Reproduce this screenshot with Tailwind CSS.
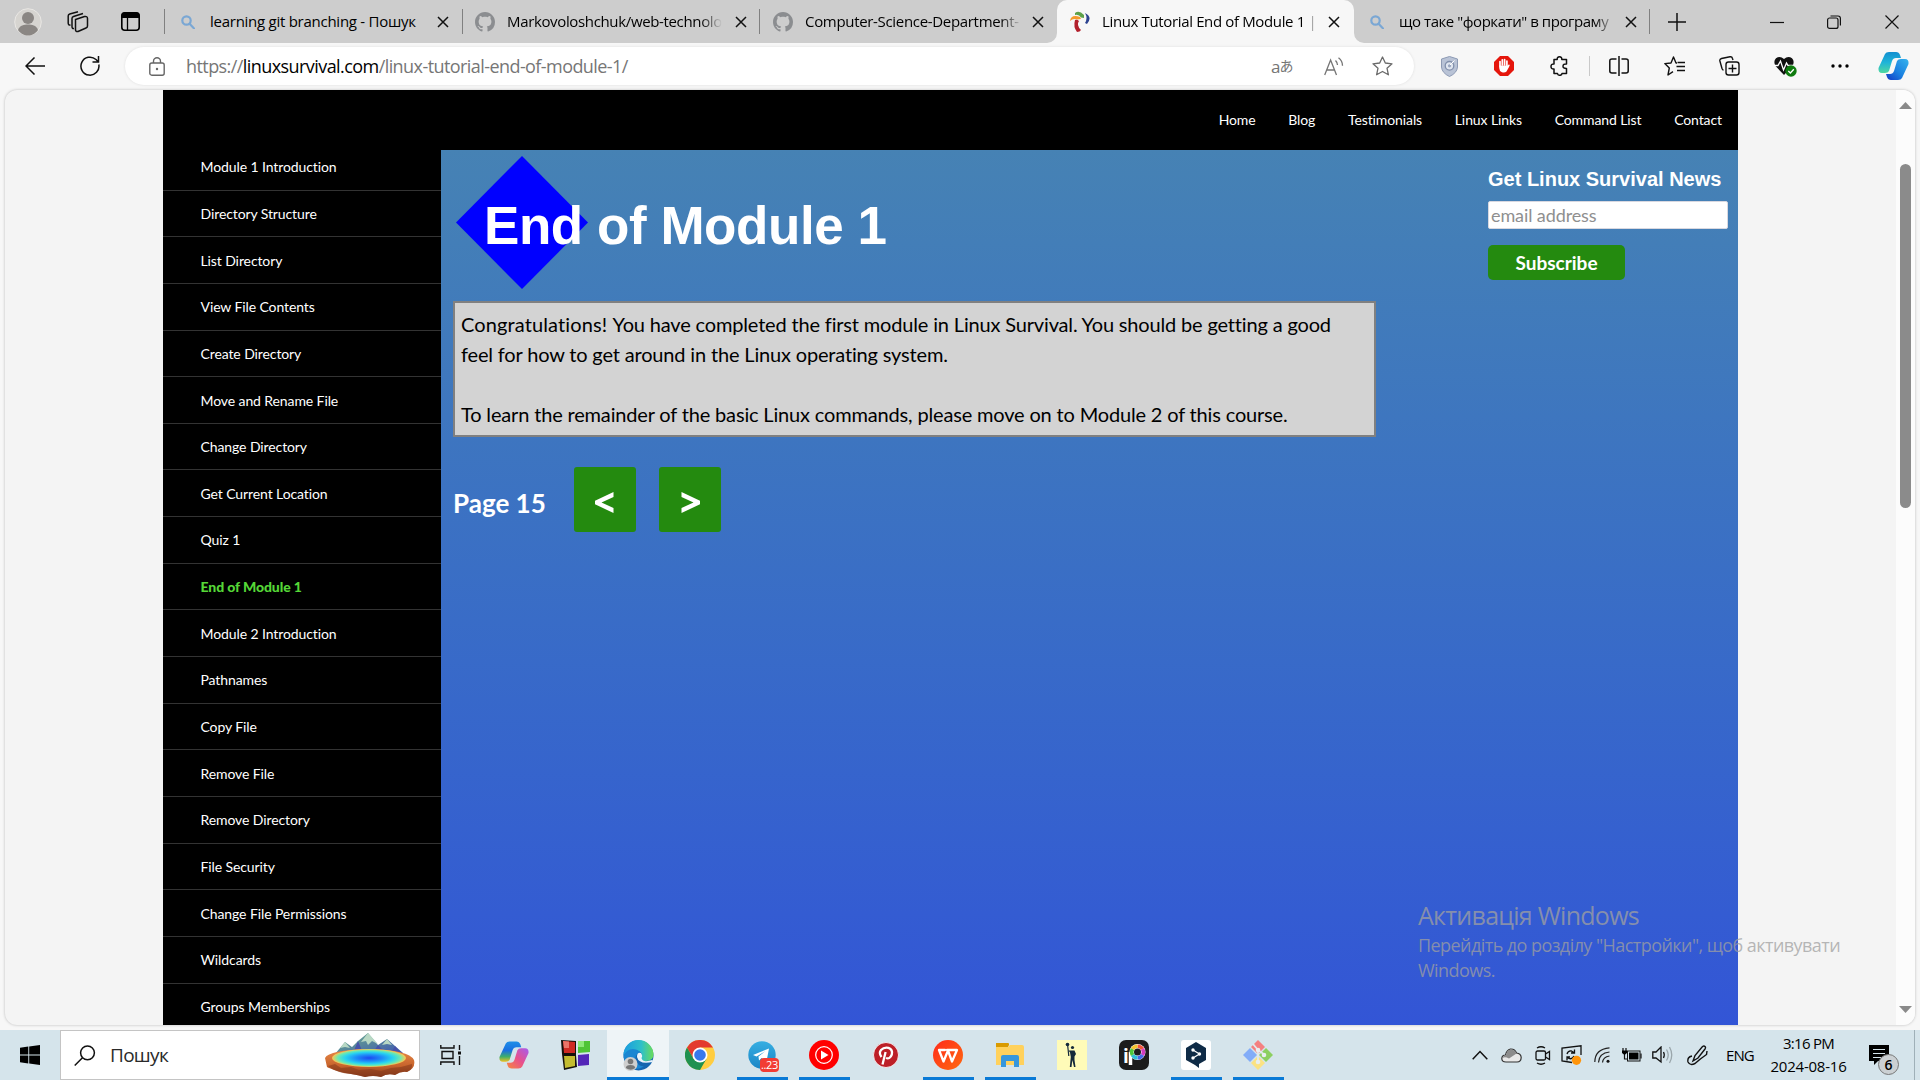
<!DOCTYPE html>
<html lang="uk">
<head>
<meta charset="utf-8">
<title>Linux Tutorial End of Module 1</title>
<script src="https://cdn.jsdelivr.net/npm/@tailwindcss/browser@4"></script>
</head>
<body class="w-[1920px] h-[1080px] overflow-hidden flex flex-col bg-[#f7f7f7] text-black font-['Open_Sans',sans-serif] relative">
<svg class="absolute w-0 h-0">
  <defs>
    <linearGradient id="cpA" x1="0" y1="0" x2="0" y2="1"><stop offset="0" stop-color="#1f8fe8"/><stop offset=".45" stop-color="#1a6fe0"/><stop offset=".75" stop-color="#3fae6a"/><stop offset="1" stop-color="#f0c020"/></linearGradient>
    <linearGradient id="cpB" x1="1" y1="0" x2="0" y2="1"><stop offset="0" stop-color="#a55cf0"/><stop offset=".5" stop-color="#e8508c"/><stop offset="1" stop-color="#f7883c"/></linearGradient>
    <linearGradient id="cpC" x1="0" y1="0" x2="0" y2="1"><stop offset="0" stop-color="#128fd0"/><stop offset=".5" stop-color="#1fb4d8"/><stop offset="1" stop-color="#50d8a0"/></linearGradient>
    <linearGradient id="cpD" x1="1" y1="0" x2="0" y2="1"><stop offset="0" stop-color="#35b4ee"/><stop offset=".55" stop-color="#1a80e0"/><stop offset="1" stop-color="#1238c4"/></linearGradient>
    <linearGradient id="edA" x1="0" y1="0" x2="1" y2="0"><stop offset="0" stop-color="#1a9be0"/><stop offset=".6" stop-color="#2ec0c8"/><stop offset="1" stop-color="#6bdc58"/></linearGradient>
    <linearGradient id="tg" x1="0" y1="0" x2="0" y2="1"><stop offset="0" stop-color="#36aee2"/><stop offset="1" stop-color="#1b86c6"/></linearGradient>
    <linearGradient id="wp" x1="0" y1="0" x2="1" y2="1"><stop offset="0" stop-color="#ff2a1a"/><stop offset="1" stop-color="#ff6a10"/></linearGradient>
    <linearGradient id="mt" x1="0" y1="0" x2="1" y2="1"><stop offset="0" stop-color="#6fb58a"/><stop offset=".5" stop-color="#54809e"/><stop offset="1" stop-color="#3c50b8"/></linearGradient>
    <radialGradient id="lake"><stop offset="0" stop-color="#1c48f0"/><stop offset=".35" stop-color="#1e8cf8"/><stop offset=".65" stop-color="#28d4f0"/><stop offset=".85" stop-color="#6ee8b0"/><stop offset="1" stop-color="#ffc850"/></radialGradient>
    <linearGradient id="rock" x1="0" y1="0" x2="0" y2="1"><stop offset="0" stop-color="#e88a48"/><stop offset=".6" stop-color="#c8642c"/><stop offset="1" stop-color="#7c3418"/></linearGradient>
    <path id="gh" fill="#8b8d90" d="M8 0C3.58 0 0 3.58 0 8c0 3.54 2.29 6.53 5.47 7.59.4.07.55-.17.55-.38 0-.19-.01-.82-.01-1.49-2.01.37-2.53-.49-2.69-.94-.09-.23-.48-.94-.82-1.13-.28-.15-.68-.52-.01-.53.63-.01 1.08.58 1.23.82.72 1.21 1.87.87 2.33.66.07-.52.28-.87.51-1.07-1.78-.2-3.64-.89-3.64-3.95 0-.87.31-1.59.82-2.15-.08-.2-.36-1.02.08-2.12 0 0 .67-.21 2.2.82.64-.18 1.32-.27 2-.27s1.36.09 2 .27c1.53-1.04 2.2-.82 2.2-.82.44 1.1.16 1.92.08 2.12.51.56.82 1.27.82 2.15 0 3.07-1.87 3.75-3.65 3.95.29.25.54.73.54 1.48 0 1.07-.01 1.93-.01 2.2 0 .21.15.46.55.38A8.01 8.01 0 0 0 16 8c0-4.42-3.58-8-8-8z"/>
    <g id="mag" fill="none" stroke="#7aa7d4" stroke-width="2.2"><circle cx="5.5" cy="5.5" r="4.2"/><path d="M8.6 8.8 13 13.4" stroke-linecap="round"/></g>
    <path id="x" d="M1 1 11 11M11 1 1 11" fill="none" stroke="#111" stroke-width="1.5"/>
  </defs>
</svg>

<!-- tab strip -->
<header class="h-[43px] shrink-0 flex items-center bg-[#cdcdcd] text-[15px]">
  <div class="w-[164px] flex items-center pl-[14px]">
    <svg class="size-7 shrink-0" viewBox="0 0 28 28"><circle cx="14" cy="14" r="13.3" fill="#d6d4d0" stroke="#e9e7e4"/><circle cx="14" cy="10" r="6" fill="#8a8683"/><path d="M4 22c2-5 6-5.500 10-5.500s8 .5 10 5.500c-3 4-6 5.500-10 5.500S7 26 4 22z" fill="#8a8683"/></svg>
    <svg class="w-[22px] h-[22px] ml-[25px] shrink-0" viewBox="0 0 22 22" fill="none" stroke="#111" stroke-width="1.5" stroke-linejoin="round"><path d="M8.500 8.500 17.500 5.500Q20.500 5 20.500 7.500V15q0 1.500-1.500 2L11 20.500Q8.500 21 8.500 18.500z"/><path d="M7 17.500Q5 18 5 15.500V7.500Q5 6 6.500 5.500L16 2.500M3.500 14Q1.200 14.500 1.200 12V5Q1.200 3.500 2.700 3L11 .8"/></svg>
    <svg class="w-[19px] h-[19px] ml-[32px] shrink-0" viewBox="0 0 19 19"><rect x=".8" y=".8" width="17.400" height="17.400" rx="3" fill="none" stroke="#000" stroke-width="1.600"/><path d="M.5 6V3Q.5.500 3 .5H16Q18.500.5 18.500 3V6z"/><path d="M6.500 5V18" stroke="#000" stroke-width="1.300"/></svg>
  </div>
  <div class="w-px h-[25px] bg-[#808080]"></div>
  <div class="w-[297px] flex items-center">
    <svg class="w-[14px] h-[14px] ml-[16px] shrink-0" viewBox="0 0 14 14"><use href="#mag"/></svg>
    <span class="ml-[15px] w-[212px] whitespace-nowrap tracking-[-0.26px]">learning git branching - Пошук</span>
    <svg class="size-3 ml-[15px] shrink-0" viewBox="0 0 12 12"><use href="#x"/></svg>
  </div>
  <div class="w-px h-[25px] bg-[#808080]"></div>
  <div class="w-[296px] flex items-center">
    <svg class="size-5 ml-[12px] shrink-0" viewBox="0 0 16 16"><use href="#gh"/></svg>
    <span class="ml-[12px] w-[215px] whitespace-nowrap tracking-[-0.35px] mask-r-from-90%">Markovoloshchuk/web-technolo</span>
    <svg class="size-3 ml-[13px] shrink-0" viewBox="0 0 12 12"><use href="#x"/></svg>
  </div>
  <div class="w-px h-[25px] bg-[#808080]"></div>
  <div class="w-[297px] flex items-center">
    <svg class="size-5 ml-[13px] shrink-0" viewBox="0 0 16 16"><use href="#gh"/></svg>
    <span class="ml-[12px] w-[217px] whitespace-nowrap tracking-[-0.32px] mask-r-from-90%">Computer-Science-Department-</span>
    <svg class="size-3 ml-[10px] shrink-0" viewBox="0 0 12 12"><use href="#x"/></svg>
  </div>
  <div class="w-[297px] h-full relative bg-[#f7f7f7] rounded-t-[10px] flex items-center">
    <svg class="absolute left-[-10px] bottom-0 size-2.5" viewBox="0 0 10 10"><path d="M10 0V10H0A10 10 0 0 0 10 0z" fill="#f7f7f7"/></svg>
    <svg class="absolute right-[-10px] bottom-0 size-2.5" viewBox="0 0 10 10"><path d="M0 0V10H10A10 10 0 0 1 0 0z" fill="#f7f7f7"/></svg>
    <svg class="w-5 h-[21px] ml-[13px] shrink-0" viewBox="0 0 20 21"><path d="M5 2Q9-1.500 14 4L14 7L11 6.500Q9 3 5 4z" fill="#5ea14a"/><path d="M0 10Q1 3 10 6L11 8L7 8.500Q3 7 0 10z" fill="#f59a2c"/><path d="M5 9Q7 8 9 10Q6 14 11 19Q10 21 7 21Q3 16 5 9z" fill="#b3202c"/><path d="M15 2Q23 6 17 13L15 12Q18 7 15 2z" fill="#2c4390"/></svg>
    <span class="ml-[12px] w-[217px] whitespace-nowrap tracking-[-0.36px] mask-r-from-92%">Linux Tutorial End of Module 1 |</span>
    <svg class="size-3 ml-[9px] shrink-0" viewBox="0 0 12 12"><use href="#x"/></svg>
  </div>
  <div class="w-[295px] flex items-center">
    <svg class="w-[14px] h-[14px] ml-[16px] shrink-0" viewBox="0 0 14 14"><use href="#mag"/></svg>
    <span class="ml-[15px] w-[217px] whitespace-nowrap tracking-[-0.45px] mask-r-from-90%">що таке "форкати" в програму</span>
    <svg class="size-3 ml-[9px] shrink-0" viewBox="0 0 12 12"><use href="#x"/></svg>
  </div>
  <div class="w-px h-[25px] bg-[#808080]"></div>
  <svg class="w-[18px] h-[18px] ml-[18px]" viewBox="0 0 18 18"><path d="M9 0V18M0 9H18" stroke="#111" stroke-width="1.500"/></svg>
  <svg class="w-[14px] h-[14px] ml-[84px]" viewBox="0 0 14 14"><path d="M0 7.500H14" stroke="#111" stroke-width="1.200"/></svg>
  <svg class="w-[14px] h-[14px] ml-[43px]" viewBox="0 0 14 14" fill="none" stroke="#111" stroke-width="1.200"><rect x=".6" y="3" width="10.400" height="10.400" rx="2"/><path d="M3.500 1H11q2.400 0 2.400 2.400V10.500"/></svg>
  <svg class="w-[14px] h-[14px] ml-[44px]" viewBox="0 0 14 14"><path d="M.5.500 13.500 13.500M13.500.500.500 13.500" stroke="#111" stroke-width="1.200"/></svg>
</header>

<!-- address bar -->
<div class="h-[47px] shrink-0 flex items-center pl-[25px] pb-[1px] text-[#1a1a1a]">
  <svg class="w-[20px] h-[18px]" viewBox="0 0 20 18"><path d="M20 9H1M9.500.500 1 9 9.500 17.500" fill="none" stroke="#111" stroke-width="1.500"/></svg>
  <svg class="w-[20px] h-[20px] ml-[35px]" viewBox="0 0 20 20"><path d="M18.800 8.500A9 9 0 1 1 16 3.500L18.500 6M18.500 0V6H12.500" fill="none" stroke="#111" stroke-width="1.500"/></svg>
  <div class="ml-[25px] w-[1289px] h-[38px] rounded-full bg-white shadow-[0_0_3px_rgba(0,0,0,0.1)] flex items-center pl-[24px]">
    <svg class="w-[16px] h-[19px] shrink-0" viewBox="0 0 16 19" fill="none" stroke="#666" stroke-width="1.400"><rect x=".8" y="6" width="14.400" height="12.200" rx="2"/><path d="M4.500 6V4.200a3.500 3.500 0 0 1 7 0V6"/><circle cx="8" cy="12" r="1.200" fill="#666" stroke="none"/></svg>
    <span class="ml-[21px] w-[1085px] whitespace-nowrap text-[18px] tracking-[-0.57px] text-[#767676]">https://<span class="text-black">linuxsurvival.com</span>/linux-tutorial-end-of-module-1/</span>
    <span class="w-[24px] flex items-center text-[17px] leading-none tracking-[-1px] text-[#757575] whitespace-nowrap font-['Open_Sans','Noto_Sans_CJK_JP',sans-serif]">a<span class="text-[14px]">あ</span></span>
    <svg class="w-[20px] h-[19px] ml-[29px] shrink-0" viewBox="0 0 20 19" fill="none" stroke="#757575" stroke-width="1.300"><path d="M.7 18 6.600 3 12.500 18M2.500 13H10.700M11.500 3.500q2 2 2 4.500M14.500 .8q4 3 4 8"/></svg>
    <svg class="w-[21px] h-[20px] ml-[28px] shrink-0" viewBox="0 0 21 20"><path d="M10.500 1 13.300 7 20 7.800 15 12.200 16.400 18.800 10.500 15.500 4.600 18.800 6 12.200 1 7.800 7.700 7z" fill="none" stroke="#6a6a6a" stroke-width="1.300" stroke-linejoin="round"/></svg>
  </div>
  <svg class="w-[17px] h-[21px] ml-[27px]" viewBox="0 0 17 21"><path d="M8.500.500 16.500 3V11Q16 17 8.500 20.500 1 17 .5 11V3z" fill="#b9c3d6" stroke="#8d9ab4"/><circle cx="8.500" cy="9.800" r="4.300" fill="#dfe5ef" stroke="#8290ac" stroke-width="1.300"/><circle cx="8.500" cy="9.800" r="1.600" fill="#98a5be"/><path d="M9 9 13.500 4.500" stroke="#fff"/></svg>
  <svg class="w-[20px] h-[20px] ml-[36px]" viewBox="0 0 20 20"><path d="M6 0H14L20 6V14L14 20H6L0 14V6z" fill="#e5160c"/><path d="M6 10V5.500M8.300 9V3.800M10.600 9V3.500M12.900 9.500V5" stroke="#fff" stroke-width="1.700" stroke-linecap="round"/><path d="M5.200 9.500H13.800L15 8.300Q16.500 9 15 11L12.500 15.500Q11 17 8 16.300 5.200 15 5.200 12z" fill="#fff"/></svg>
  <svg class="w-[20px] h-[20px] ml-[36px]" viewBox="0 0 20 20"><path d="M4 3.500H7.200Q7 .8 9.500 .8T11.800 3.500H16.500V8Q13 7.800 13 10.200T16.500 12.500V17.500H12Q11.800 19.300 9.800 19.300T7.500 17.500H4V13Q1 13.200 1 10.500T4 8z" fill="none" stroke="#111" stroke-width="1.500" stroke-linejoin="round"/></svg>
  <div class="w-px h-[20px] bg-[#c9c9c9] ml-[19px]"></div>
  <svg class="w-[20px] h-[20px] ml-[19px]" viewBox="0 0 20 20" fill="none" stroke="#111" stroke-width="1.500"><path d="M10 0V20M7.500 3H3Q.8 3 .8 5V15Q.8 17 3 17H7.500M12.500 3H17Q19.200 3 19.200 5V15Q19.200 17 17 17H12.500"/></svg>
  <svg class="w-[21px] h-[20px] ml-[35px]" viewBox="0 0 21 20" fill="none" stroke="#111" stroke-width="1.400" stroke-linejoin="round"><path d="M13 7H12L9.500 1 7 7 .8 7.600 5.300 12 4 19 9 15.700M12.500 10.500H21M13.500 6.500H21M13 14.500H21"/></svg>
  <svg class="w-[21px] h-[20px] ml-[34px]" viewBox="0 0 21 20" fill="none" stroke="#111" stroke-width="1.400"><rect x="7" y="6" width="13" height="13" rx="2.500"/><path d="M13.500 8.500V16.500M9.500 12.500H17.500M4.500 14Q3.500 14 3 12.500L.9 5Q.5 3 2.500 2.500L11 .8Q13 .5 13.500 2.500L14 4"/></svg>
  <svg class="w-[23px] h-[21px] ml-[34px]" viewBox="0 0 23 21"><path d="M10 19 1.500 10Q-1 5 2 2.200 6-.5 10 3 14-.5 18 2.200 21 5 18.500 10z" fill="#111"/><path d="M0 9.500H4L6.500 5 9.500 14 12.500 7 14 9.500H19" fill="none" stroke="#fff" stroke-width="1.300"/><circle cx="17" cy="15" r="5.700" fill="#0f7b0f"/><path d="M14.300 15 16.400 17 19.800 13.300" fill="none" stroke="#fff" stroke-width="1.300"/></svg>
  <svg class="w-[18px] h-[4px] ml-[34px]" viewBox="0 0 18 4"><circle cx="2" cy="2" r="1.700"/><circle cx="9" cy="2" r="1.700"/><circle cx="16" cy="2" r="1.700"/></svg>
  <svg class="w-[31px] h-[28px] ml-[29px]" viewBox="0 0 31 28"><path d="M7 2Q8 0 11 0H18Q21 0 22 3L23 6H18Q15 6 14 9L11 19Q10 21 7 21H4Q0 21 .5 16z" fill="url(#cpC)"/><path d="M24 26Q23 28 20 28H13Q10 28 9 25L8 22H12Q15 22 16 19L19 9Q20 7 23 7H27Q31 7 30.500 12z" fill="url(#cpD)"/></svg>
</div>

<!-- page viewport -->
<main class="mx-[5px] h-[935px] shrink-0 w-[1910px] rounded-[12px] overflow-hidden bg-[#f4f4f4] shadow-[0_0_3px_rgba(0,0,0,0.25)] flex font-['Lato',sans-serif]">
  <div class="ml-[158px] w-[1575px] flex flex-col bg-black">
    <nav class="h-[60px] shrink-0 flex items-center justify-end gap-[32.7px] pr-[16px] pb-[2px] text-[14px] tracking-[-0.1px] text-white">
      <a>Home</a><a>Blog</a><a>Testimonials</a><a>Linux Links</a><a>Command List</a><a>Contact</a>
    </nav>
    <div class="flex-1 min-h-0 flex">
      <ul id="menu" class="w-[278px] h-[875px] overflow-hidden -mt-[6px] shrink-0 text-[14px] tracking-[-0.1px] text-white"></ul>
      <div class="flex-1 flex justify-between bg-linear-to-b from-[#4682b4] to-[#3355d6]">
        <section class="ml-[12px] w-[923px] flex flex-col text-white">
          <div class="relative h-[151px] shrink-0">
            <svg class="absolute left-[3px] top-[6px] w-[132px] h-[133px]" viewBox="0 0 133 133" preserveAspectRatio="none"><path d="M66.500 0 133 66.500 66.500 133 0 66.500z" fill="#00f"/></svg>
            <h1 class="absolute left-[31px] top-[46px] whitespace-nowrap leading-[60px] font-bold text-[53px] tracking-[-0.45px] font-['Liberation_Sans',sans-serif]">End of Module 1</h1>
          </div>
          <div class="h-[136px] shrink-0 border-2 border-[#808080] bg-[#d3d3d3] text-black text-[20px] leading-[30px] tracking-[-0.165px] px-[6px] pt-[6px]">
            <p class="whitespace-nowrap"><span class="tracking-[0.12px]">Congratulations! </span>You have completed the first module in Linux Survival. You should be getting a good<br>feel for how to get around in the Linux operating system.</p>
            <p class="mt-[30px] whitespace-nowrap">To learn the remainder of the basic Linux commands, please move on to Module 2 of this course.</p>
          </div>
          <div class="mt-[30px] flex items-center font-bold">
            <span class="w-[121px] pt-[7px] text-[26px] leading-8">Page 15</span>
            <button class="w-[62px] h-[65px] rounded-[3px] bg-[#248a0f] flex items-center justify-center"><svg class="w-[19px] h-[21px] mt-[5px] mr-[2px]" viewBox="0 0 19 21"><path d="M18.500 0V5L6.500 10.500 18.500 16V21L0 12.300V8.700z" fill="#fff"/></svg></button>
            <button class="ml-[23px] w-[62px] h-[65px] rounded-[3px] bg-[#248a0f] flex items-center justify-center"><svg class="w-[19px] h-[21px] mt-[5px]" viewBox="0 0 19 21"><path d="M.5 0V5L12.500 10.500.5 16V21L19 12.300V8.700z" fill="#fff"/></svg></button>
          </div>
        </section>
        <aside class="w-[250px] pt-[17px] flex flex-col items-start text-white">
          <h2 class="font-bold text-[20px] leading-6 whitespace-nowrap font-['Liberation_Sans',sans-serif]">Get Linux Survival News</h2>
          <div class="mt-[10px] w-[240px] h-[28px] rounded-[2px] border border-[#d8d8e0] bg-white pl-[2px] text-[18px] leading-[26px] tracking-[-0.1px] text-[#8f8f8f]">email address</div>
          <button class="mt-[16px] w-[137px] h-[35px] rounded-[5px] bg-[#248a0f] text-[19px] leading-[35px] font-bold">Subscribe</button>
        </aside>
      </div>
    </div>
  </div>
  <div class="ml-auto w-[19px] bg-[#fcfcfc] flex flex-col items-center pt-[12px] pb-[12px]">
    <svg class="w-[13px] h-[7px]" viewBox="0 0 13 7"><path d="M6.500 0 13 7H0z" fill="#8a8a8a"/></svg>
    <div class="mt-[55px] w-[11px] h-[344px] rounded-full bg-[#8b8b8b]"></div>
    <svg class="mt-auto w-[13px] h-[7px]" viewBox="0 0 13 7"><path d="M6.500 7 13 0H0z" fill="#8a8a8a"/></svg>
  </div>
</main>
<div class="h-[5px] shrink-0"></div>

<!-- activation notice -->
<div class="absolute left-[1418px] top-[898px] text-[#a0a0a0]/75 whitespace-nowrap">
  <p class="text-[25px] leading-[34px] tracking-[-0.72px]">Активація Windows</p>
  <p class="text-[18px] leading-[25px] pt-px tracking-[-0.56px]">Перейдіть до розділу "Настройки", щоб активувати<br>Windows.</p>
</div>

<!-- taskbar -->
<footer class="h-[50px] shrink-0 flex items-center bg-[#d5e4eb]">
  <svg class="w-[20px] h-[20px] ml-[20px]" viewBox="0 0 20 20"><path d="M0 2.800 8.300 1.600V9.500H0zM9.200 1.500 20 0V9.500H9.200zM0 10.400H8.300V18.400L0 17.200zM9.200 10.400H20V20L9.200 18.500z"/></svg>
  <div class="ml-[20px] w-[360px] h-[50px] bg-white border border-[#c4c4c4] flex items-center">
    <svg class="w-[22px] h-[21px] ml-[13px]" viewBox="0 0 22 21"><circle cx="13.500" cy="7.800" r="6.900" fill="none" stroke="#111" stroke-width="1.500"/><path d="M8.500 12.800.7 20.500" stroke="#111" stroke-width="1.500"/></svg>
    <span class="ml-[14px] text-[19px] tracking-[-0.7px] text-[#2a2a2a]">Пошук</span>
    <svg class="ml-auto mr-[4px] w-[90px] h-[45px]" viewBox="0 0 90 45"><path d="M10 21 20 9 27 14 33 8 43 0 53 12 62 6 70 13 78 20 78 24H12z" fill="url(#mt)"/><path d="M43 0 36 9 41 8 43 12 47 8 53 11zM20 9 15 15 20 14 25 15zM62 6 57 12 62 11 67 12z" fill="#b8d8c4"/><path d="M33 8 28 20H38zM53 12 47 21H62zM70 13 66 20H76z" fill="#4652a8"/><path d="M0 25Q4 17 44 16 84 17 89 27 91 35 82 39 76 38 70 42 62 40 56 44 48 42 40 44 33 42 26 41 18 40 12 38 4 35 2 34z" fill="url(#rock)"/><path d="M3 33 10 31 16 35 26 34 34 37 46 36 56 38 66 35 76 34 87 31Q88 36 82 39 76 38 70 42 62 40 56 44 48 42 40 44 33 42 26 41 12 40 3 33z" fill="#8a3c1c" opacity=".6"/><ellipse cx="44" cy="25" rx="37" ry="9" fill="url(#lake)"/></svg>
  </div>
  <svg class="w-[22px] h-[20px] ml-[20px] shrink-0" viewBox="0 0 22 20" fill="none" stroke="#111" stroke-width="1.400"><path d="M.8 0V3H14V0M.8 20V17H14V20M2 6.500H13V13.500H2zM19.500 0V5M19.500 11V20"/><rect x="18" y="6.500" width="3" height="3" fill="#111" stroke="none"/></svg>
  <div class="ml-[21px] flex h-full">
    <div class="w-[62px] flex items-center justify-center"><svg class="w-[30px] h-[28px]" viewBox="0 0 31 28"><path d="M7 2Q8 0 11 0H18Q21 0 22 3L23 6H18Q15 6 14 9L11 19Q10 21 7 21H4Q0 21 .5 16z" fill="url(#cpA)"/><path d="M24 26Q23 28 20 28H13Q10 28 9 25L8 22H12Q15 22 16 19L19 9Q20 7 23 7H27Q31 7 30.500 12z" fill="url(#cpB)"/></svg></div>
    <div class="w-[62px] flex items-center justify-center"><svg class="w-[30px] h-[30px]" viewBox="0 0 30 30"><path d="M0 0 15 1V15L1 14zM15 15 1 14 3 30 16 27z" fill="#16110c"/><path d="M2 1 14 2V13L3 13z" fill="#cf2a22"/><path d="M17 1H29V12L17 13z" fill="#4fc436"/><path d="M3 16 14 16V26L4 28z" fill="#c4bc30"/><path d="M17 15 28 14V25L17 26z" fill="#5426b8"/><path d="M2 1 8 1.500V8H3z" fill="#ec7468"/><path d="M17 1H23V7H17z" fill="#8ce878"/></svg></div>
    <div class="w-[62px] relative bg-[#eef4f7] flex items-center justify-center"><svg class="w-[31px] h-[31px]" viewBox="0 0 31 31"><circle cx="15.500" cy="15.500" r="15" fill="#1565b0"/><path d="M.5 15.500A15 15 0 0 1 30.500 14.500Q30.500 21 23 21 17 21 18.500 17 20 13 15.500 11 8 8 .5 15.500z" fill="url(#edA)"/><path d="M.5 17Q3 9 10 9 17 10 16.500 13 11 15 13 21 15 26 21 26.500 12 32 5 25 1 21 .5 17z" fill="#1a86d2"/><path d="M18 13Q14 12 14 17 16 25 29.500 22 31 19 27 20.500 20 23 18.500 18 20 16 18 13z" fill="#e8f4fa"/><circle cx="7.500" cy="24" r="7" fill="#cfcfcf"/><circle cx="7.500" cy="21.500" r="2.800" fill="#777"/><path d="M2.800 28Q3 25 7.500 25T12.200 28Q8 31.500 2.800 28z" fill="#777"/></svg><div class="absolute bottom-0 inset-x-0 h-[3px] bg-[#0a7ad6]"></div></div>
    <div class="w-[62px] flex items-center justify-center"><svg class="w-[30px] h-[30px]" viewBox="0 0 30 30"><circle cx="15" cy="15" r="15" fill="#ffcd40"/><path d="M2 7.500A15 15 0 0 1 28 7.500H15L8.500 18.700z" fill="#e33b2e"/><path d="M2 7.500A15 15 0 0 0 15 30L21.500 18.700H8.500z" fill="#1f9150"/><circle cx="15" cy="15" r="7.500" fill="#fff"/><circle cx="15" cy="15" r="5.800" fill="#3878ec"/></svg></div>
    <div class="w-[62px] relative flex items-center justify-center"><svg class="w-[28px] h-[28px]" viewBox="0 0 28 28"><circle cx="14" cy="14" r="13.700" fill="url(#tg)"/><path d="M5 14 21 7.500 18.500 20.500 13.500 17 11 19.500 10.500 15.500 17.500 10 8.500 15.500z" fill="#fff"/></svg><span class="absolute left-[29px] top-[28px] w-[19px] h-[14px] rounded-[4px] bg-[#f23c34] text-white text-[11px] leading-[14px] text-center tracking-[-0.4px]">..23</span><div class="absolute bottom-0 left-[6px] w-[51px] h-[3px] bg-[#0a7ad6]"></div></div>
    <div class="w-[62px] relative flex items-center justify-center"><svg class="w-[30px] h-[30px]" viewBox="0 0 30 30"><circle cx="15" cy="15" r="15" fill="#f00"/><circle cx="15" cy="15" r="8.300" fill="none" stroke="#fff" stroke-width="1.200"/><path d="M12 10.500 19.500 15 12 19.500z" fill="#fff"/></svg><div class="absolute bottom-0 left-[6px] w-[51px] h-[3px] bg-[#0a7ad6]"></div></div>
    <div class="w-[62px] flex items-center justify-center"><svg class="w-[26px] h-[26px]" viewBox="0 0 26 26"><circle cx="13" cy="13" r="12.500" fill="#bd1f27" stroke="#fff" stroke-width=".8"/><path d="M8.500 15Q5.500 11 8 8 11 4.800 15.500 5.800 20 7.500 18.800 12.500 17 17.500 13 16M12.600 10 9.500 22.500" fill="none" stroke="#fff" stroke-width="2.300" stroke-linejoin="round"/></svg></div>
    <div class="w-[62px] relative flex items-center justify-center"><svg class="w-[30px] h-[30px]" viewBox="0 0 30 30"><circle cx="15" cy="15" r="15" fill="url(#wp)"/><path d="M12 10H6L10.500 21.500 15 10.500 19 21.500 24 10H14" fill="none" stroke="#fff" stroke-width="2.300" stroke-linejoin="round" stroke-linecap="round"/></svg><div class="absolute bottom-0 left-[6px] w-[51px] h-[3px] bg-[#0a7ad6]"></div></div>
    <div class="w-[62px] relative flex items-center justify-center"><svg class="w-[28px] h-[24px]" viewBox="0 0 28 24"><path d="M0 0H12Q13.500 0 13 2L12 4H0z" fill="#d99a00"/><path d="M0 4H12L14 2H26Q28 2 28 4V22H0z" fill="#ffd15c"/><path d="M5 24V14Q5 12 7 12H21Q23 12 23 14V24H18V18H10V24z" fill="#3697dc"/></svg><div class="absolute bottom-0 left-[6px] w-[51px] h-[3px] bg-[#0a7ad6]"></div></div>
    <div class="w-[62px] flex items-center justify-center"><svg class="w-[30px] h-[30px]" viewBox="0 0 30 30"><path d="M0 0H30V30H0z" fill="#fffbb8"/><path d="M10.500 4 11.800 16" stroke="#15293a" stroke-width="1.200" fill="none"/><circle cx="10.500" cy="4.500" r="1.800" fill="#15293a"/><circle cx="15.500" cy="7.500" r="1.600" fill="#15293a"/><path d="M11.500 10.500H17.500L19 14 17.500 16.500V20L18.500 27H17L15.300 20 14.500 27H12.800L13.800 17 13 12.500z" fill="#15293a"/></svg></div>
    <div class="w-[62px] flex items-center justify-center"><div class="relative w-[30px] h-[30px] rounded-[7px] bg-[#1c1c1c] flex"><span class="absolute left-[4px] top-[4px] text-white font-bold text-[19px] leading-[24px]">i</span><svg class="absolute left-[9px] top-[3px] w-[18px] h-[23px]" viewBox="0 0 18 23"><path d="M2.500 9V22" stroke="#fff" stroke-width="3.500"/><circle cx="9.500" cy="9" r="8" fill="#fff"/><g fill="none" stroke-width="3.600"><path d="M9.500 3.200A5.800 5.800 0 0 1 14.500 6" stroke="#f0563c"/><path d="M14.500 6A5.800 5.800 0 0 1 14.500 12" stroke="#d23cc0"/><path d="M14.500 12A5.800 5.800 0 0 1 9.500 14.800" stroke="#4668e8"/><path d="M9.500 14.800A5.800 5.800 0 0 1 4.500 12" stroke="#2ec0d8"/><path d="M4.500 12A5.800 5.800 0 0 1 4.500 6" stroke="#4cc83c"/><path d="M4.500 6A5.800 5.800 0 0 1 9.500 3.200" stroke="#f4c42c"/></g><circle cx="9.500" cy="9" r="3.500" fill="#1c1c1c"/></svg></div></div>
    <div class="w-[62px] relative flex items-center justify-center"><svg class="w-[30px] h-[30px]" viewBox="0 0 30 30"><rect width="30" height="30" rx="3" fill="#fff"/><path d="M15 2 25 8V20L18 24V28L14 25 5 20V8z" fill="#0f2b46"/><path d="M12 10 18.500 14 12 18" fill="none" stroke="#fff" stroke-width="1.200"/><circle cx="12" cy="10" r="1.700" fill="#fff"/><circle cx="18.500" cy="14" r="1.700" fill="#fff"/><circle cx="12" cy="18" r="1.700" fill="#fff"/></svg><div class="absolute bottom-0 left-[6px] w-[51px] h-[3px] bg-[#0a7ad6]"></div></div>
    <div class="w-[62px] relative flex items-center justify-center"><svg class="w-[30px] h-[30px]" viewBox="0 0 30 30"><path d="M15 0 22 7 15 14 8 7z" fill="#f48080"/><path d="M23 8 30 15 23 22 16 15z" fill="#8ccf60"/><path d="M7 8 14 15 7 22 0 15z" fill="#82acf8"/><path d="M15 16 22 23 15 30 8 23z" fill="#fbe282"/><path d="M10 4 15 10V23M15 10 22 15" stroke="#e2e9ec" stroke-width="1.800" fill="none"/><circle cx="15" cy="10" r="2.300" fill="#e8eef0"/><circle cx="15" cy="22" r="2.300" fill="#e8eef0"/><circle cx="21" cy="15" r="2.300" fill="#e8eef0"/></svg><div class="absolute bottom-0 left-[6px] w-[51px] h-[3px] bg-[#0a7ad6]"></div></div>
  </div>
  <div class="ml-auto flex items-center h-full">
    <svg class="w-[16px] h-[10px]" viewBox="0 0 16 10"><path d="M.7 9.300 8 1.500 15.300 9.300" fill="none" stroke="#111" stroke-width="1.500"/></svg>
    <svg class="w-[21px] h-[15px] ml-[13px]" viewBox="0 0 21 15"><path d="M5 14Q.8 14 .8 10.500 1 7 4.500 7 5.500 2 9.500 1 14 .8 15.500 5 20 5.500 20.200 9.500 20 14 16 14z" fill="#e9e9e9" stroke="#333" stroke-width="1.200"/><path d="M1.500 10Q2 7.500 5 7 6 2 9.500 1.500 14 1.500 15.500 5.500L8 10.500Q4 8.500 1.500 10z" fill="#8c8c8c"/></svg>
    <svg class="w-[16px] h-[19px] ml-[13px]" viewBox="0 0 16 19" fill="none" stroke="#111" stroke-width="1.300"><rect x="1" y="5" width="9.500" height="9" rx="1.500"/><path d="M10.500 8 14.500 5.500V13.500L10.500 11M2 2Q6-.5 10 2M2 17Q6 19.500 10 17"/></svg>
    <svg class="w-[21px] h-[20px] ml-[10px]" viewBox="0 0 21 20" fill="none" stroke="#111" stroke-width="1.300"><path d="M11 17.500 1 16V3L20 .8V10"/><path d="M6 9Q7 5.500 10.500 6L13 7.500M13.500 4.500V8H10M13 11Q11 14.500 8 13.500L6 12M6 15.500V12H9"/><circle cx="15.500" cy="15.300" r="4.600" fill="#ff9409" stroke="none"/></svg>
    <svg class="w-[16px] h-[16px] ml-[12px]" viewBox="0 0 16 16" fill="none" stroke="#222" stroke-width="1.200"><path d="M.8 15Q1 2 15.500.8M4.500 15.500Q5 6 15.500 5M8.500 15.500Q9 10 15.500 9"/><circle cx="14" cy="14.300" r="1.500" fill="#111" stroke="none"/></svg>
    <svg class="w-[20px] h-[14px] ml-[12px]" viewBox="0 0 20 14"><rect x="5.500" y="3" width="12.500" height="10" fill="none" stroke="#111"/><path d="M7 4.500H16.500V11.500H7z"/><path d="M19 5.500V10.500M1 0V3M4 0V3M2.500 6V11H5" stroke="#111" stroke-width="1.200" fill="none"/><path d="M0 2.500H5V5L2.500 7 0 5z"/></svg>
    <svg class="w-[21px] h-[18px] ml-[10px]" viewBox="0 0 21 18" fill="none" stroke="#111" stroke-width="1.300"><path d="M.8 6H4L9 1V16L4 12H.8z"/><path d="M11.500 6Q13 8.500 11.500 12"/><path d="M14.500 3.500Q18 9 14.500 14.500M17.500 1Q22 9 17.500 17" stroke="#9aa6ab"/></svg>
    <svg class="w-[21px] h-[21px] ml-[14px]" viewBox="0 0 21 21" fill="none" stroke="#111" stroke-width="1.400"><path d="M6 16 8 10.500 15.500 1.500Q17 .5 18 1.500T18 4L11 13zM5 11Q0 12 1 17 3 21 8 18.500 13 14 19.500 9.500L20 6"/></svg>
    <span class="ml-[18px] w-[30px] text-[15px] tracking-[-0.9px]">ENG</span>
    <div class="ml-[9px] w-[87px] text-center text-[15px] leading-[23px]"><p class="tracking-[-0.7px]">3:16 PM</p><p class="tracking-[-0.23px]">2024-08-16</p></div>
    <div class="relative ml-[17px] w-[30px] h-[34px]"><svg class="absolute left-0 top-[7px] w-[20px] h-[20px]" viewBox="0 0 20 20"><path d="M0 0H20V16H9L5 20V16H0z"/><path d="M4 4.500H16M4 8.500H16M4 12.500H12" stroke="#d5e4eb" stroke-width="1.200"/></svg><span class="absolute left-[9px] top-[16px] w-[21px] h-[21px] rounded-full bg-[#cbd0d3] border border-[#777] text-[14px] leading-[19px] font-semibold text-center">6</span></div>
    <div class="ml-[15px] w-px h-full bg-[#9fb0b8] mr-[5px]"></div>
  </div>
</footer>
<script>
const items = ["Module 1 Introduction","Directory Structure","List Directory","View File Contents","Create Directory","Move and Rename File","Change Directory","Get Current Location","Quiz 1","End of Module 1","Module 2 Introduction","Pathnames","Copy File","Remove File","Remove Directory","File Security","Change File Permissions","Wildcards","Groups Memberships"];
document.getElementById("menu").innerHTML = items.map(t =>
  `<li class="h-[46.65px] pl-[37.5px] flex items-center border-b border-[#333333] ${t === "End of Module 1" ? "font-black text-[#55d737]" : ""}">${t}</li>`).join("");
</script>
</body>
</html>
